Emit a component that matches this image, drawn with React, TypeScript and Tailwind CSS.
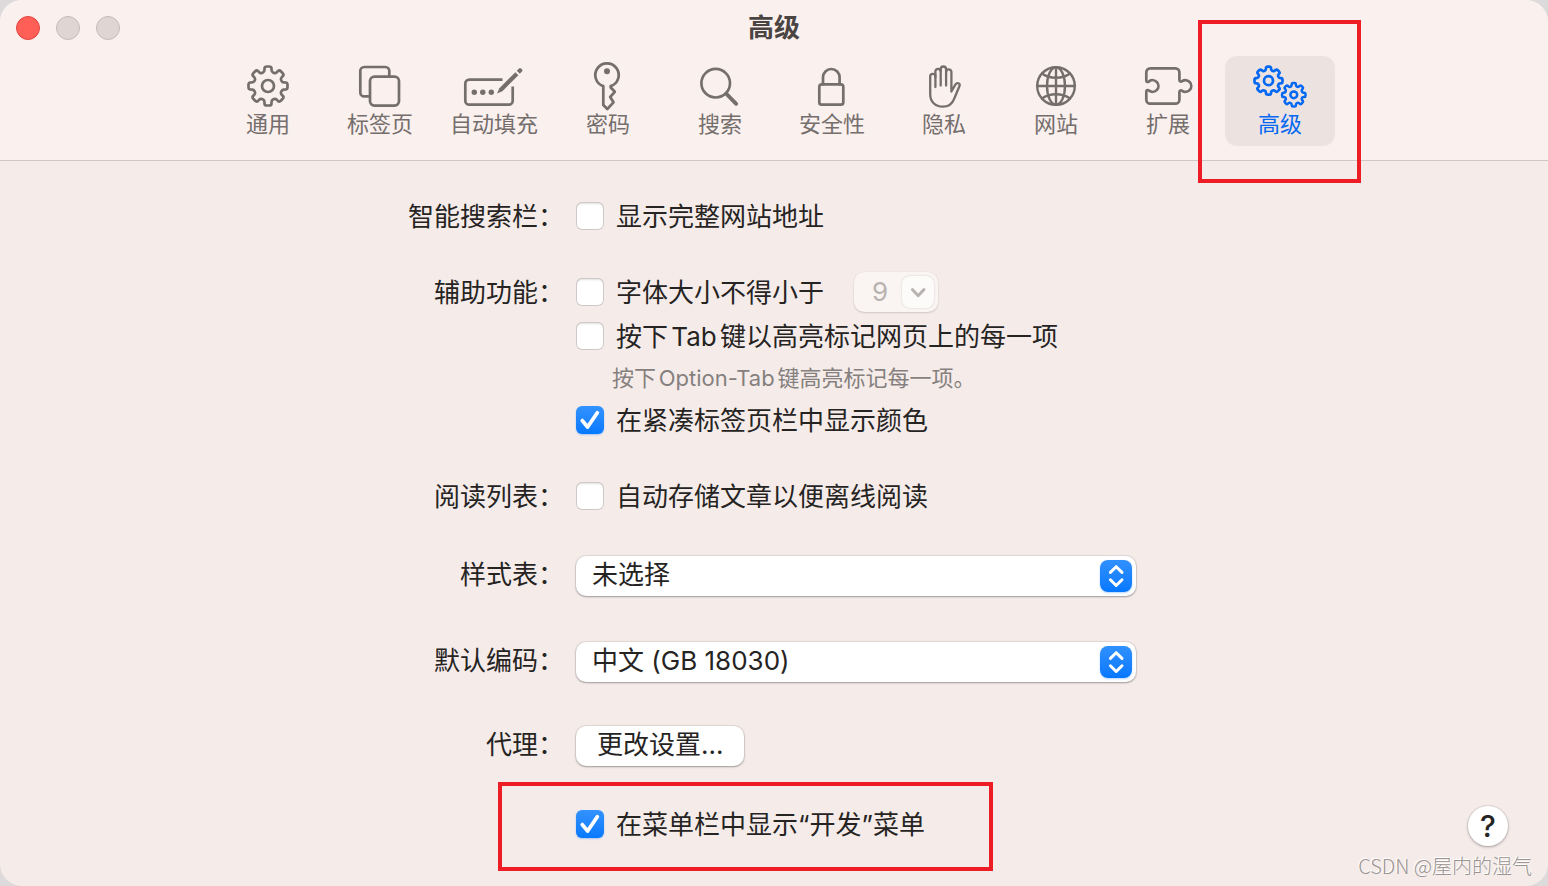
import type { ReactNode } from "react";

type Point = [number, number];

function gearPath(cx: number, cy: number, outer: number, root: number, teeth = 8) {
  const step = (Math.PI * 2) / teeth;
  const points: Point[] = [];
  for (let i = 0; i < teeth; i++) {
    const mid = i * step - Math.PI / 2;
    const corners: Point[] = [
      [-0.32, root],
      [-0.22, outer],
      [0.22, outer],
      [0.32, root],
    ];
    corners.forEach(([a, r]) => {
      points.push([cx + r * Math.cos(mid + a * step), cy + r * Math.sin(mid + a * step)]);
    });
  }
  const mix = (a: Point, b: Point, t: number) =>
    `${(a[0] + (b[0] - a[0]) * t).toFixed(2)} ${(a[1] + (b[1] - a[1]) * t).toFixed(2)}`;
  const d = points.map((p, i) => {
    const prev = points[(i + points.length - 1) % points.length];
    const next = points[(i + 1) % points.length];
    return `${i === 0 ? "M" : "L"}${mix(p, prev, 0.35)}Q${p[0].toFixed(2)} ${p[1].toFixed(2)} ${mix(p, next, 0.35)}`;
  });
  return d.join("") + "Z";
}

function Icon({ children }: { children: ReactNode }) {
  return (
    <svg
      width="64"
      height="52"
      viewBox="0 0 64 52"
      fill="none"
      stroke="currentColor"
      strokeWidth="2.7"
      strokeLinecap="round"
      strokeLinejoin="round"
      aria-hidden="true"
      className="shrink-0"
    >
      {children}
    </svg>
  );
}

const tabs = [
  {
    label: "通用",
    icon: (
      <>
        <path d={gearPath(32, 26, 19.8, 14.6)} />
        <circle cx="32" cy="26" r="6" />
      </>
    ),
  },
  {
    label: "标签页",
    icon: (
      <>
        <path d="M21 36.4h-4.7a4 4 0 0 1-4-4V11a4 4 0 0 1 4-4h21a4 4 0 0 1 4 4v5" />
        <rect x="22" y="16.6" width="29" height="29" rx="4.5" />
      </>
    ),
  },
  {
    label: "自动填充",
    wide: true,
    icon: (
      <>
        <path d="M40.5 19.6H7.3a4 4 0 0 0-4 4v17.1a4 4 0 0 0 4 4h39.4a4 4 0 0 0 4-4V26.5" strokeLinecap="butt" />
        <g fill="currentColor" stroke="none">
          <circle cx="12.3" cy="32.3" r="2.7" />
          <circle cx="20.8" cy="32.3" r="2.7" />
          <circle cx="29.3" cy="32.3" r="2.7" />
          <path d="M35 33.6l2.4-5.4 16-16 3 3-16 16z" />
          <path d="M54.8 10.8l2.2-2.2c1.6-1.5 4.5 1.3 3 3l-2.2 2.2z" />
        </g>
      </>
    ),
  },
  {
    label: "密码",
    icon: (
      <>
        <path d="M27.3 26.1V45l4 4 6.2-6.7-3.3-5.3 4.6-5.2-4.1-4.3v-1.4a11.7 11.7 0 1 0-7.4 0z" />
        <circle cx="31" cy="11.3" r="3" fill="currentColor" stroke="none" />
      </>
    ),
  },
  {
    label: "搜索",
    icon: (
      <>
        <circle cx="27.7" cy="23.2" r="14.3" />
        <path d="M38.4 33.9l9.8 9.9" strokeWidth="3.8" />
      </>
    ),
  },
  {
    label: "安全性",
    icon: (
      <>
        <rect x="19.3" y="24.3" width="24" height="20.4" rx="2.5" />
        <path d="M23 24.3v-7a8.3 8.3 0 0 1 16.6 0v7" />
      </>
    ),
  },
  {
    label: "隐私",
    icon: (
      <g strokeWidth="2.3">
        <path d="M23.4 27V16.5a2.6 2.6 0 0 0-5.2 0V34c0 7.8 5 12.7 12.6 12.7 6.6 0 9.7-3.4 11.6-8.4l5.1-12.3c1-2.9-2.4-4-4-1.6l-4.1 7.1V12a2.6 2.6 0 0 0-5.2 0" />
        <path d="M23.4 17v-5.5a2.65 2.65 0 0 1 5.3 0v14" />
        <path d="M28.7 11V9.2a2.7 2.7 0 0 1 5.4 0v16.3" />
      </g>
    ),
  },
  {
    label: "网站",
    icon: (
      <g strokeWidth="2.4">
        <circle cx="32" cy="26" r="18.8" />
        <ellipse cx="32" cy="26" rx="9" ry="18.8" />
        <path d="M32 7.2v37.6M13.2 26h37.6" />
        <path d="M18 13.5c4 3 9 4.3 14 4.3s10-1.3 14-4.3M18 38.5c4-3 9-4.3 14-4.3s10 1.3 14 4.3" />
      </g>
    ),
  },
  {
    label: "扩展",
    icon: (
      <path d="M10.3 20.5v-8.2a4 4 0 0 1 4-4h25.1a4 4 0 0 1 4 4V20c0 1.8 1.6 2 2.8 1.2a5.8 5.8 0 1 1 0 9.6c-1.2-.8-2.8-.6-2.8 1.2v7.7a4 4 0 0 1-4 4H14.3a4 4 0 0 1-4-4v-8.2c0-1.8 1.6-1.8 2.8-.9a5.8 5.8 0 1 0 0-9.2c-1.2.9-2.8.9-2.8-.9z" />
    ),
  },
  {
    label: "高级",
    active: true,
    icon: (
      <>
        <path d={gearPath(20.5, 20.7, 14.2, 10.8)} />
        <circle cx="20.5" cy="20.7" r="4.5" />
        <g strokeWidth="2.5">
          <path d={gearPath(45.8, 34.8, 11.9, 8.9)} />
          <circle cx="45.8" cy="34.8" r="3.4" />
        </g>
      </>
    ),
  },
];

function Row({ label, htmlFor, className, children }: { label?: string; htmlFor?: string; className?: string; children: ReactNode }) {
  return (
    <div className={`grid grid-cols-[160px_minmax(0,560px)] gap-3 ${className ?? ""}`}>
      {htmlFor ? (
        <label htmlFor={htmlFor} className="self-center pb-0.5 text-right whitespace-nowrap">{label}</label>
      ) : (
        <span className="h-7 text-right leading-[30px] whitespace-nowrap">{label}</span>
      )}
      <div>{children}</div>
    </div>
  );
}

function Checkbox({ label, defaultChecked }: { label: string; defaultChecked?: boolean }) {
  return (
    <label className="flex h-7 w-fit gap-3 leading-[30px] whitespace-nowrap [text-autospace:normal]">
      <span className="relative flex">
        <input
          type="checkbox"
          defaultChecked={defaultChecked}
          className="peer size-7 appearance-none rounded-md bg-white shadow-[inset_0_0_0_1px_#cfc8c6,inset_0_2px_2px_rgba(0,0,0,0.12)] checked:bg-linear-to-b checked:from-[#3292ff] checked:to-[#0579ff] checked:shadow-[0_1px_2px_rgba(0,110,255,0.3)]"
        />
        <svg
          viewBox="0 0 28 28"
          className="pointer-events-none absolute inset-0 hidden size-7 peer-checked:block"
          fill="none"
          stroke="white"
          strokeWidth="3.8"
          strokeLinecap="round"
          strokeLinejoin="round"
          aria-hidden="true"
        >
          <path d="M6.3 14.6l5.3 6.4L21.3 6.8" />
        </svg>
      </span>
      {label}
    </label>
  );
}

function Popup({ id, value }: { id: string; value: string }) {
  return (
    <div className="relative">
      <select
        id={id}
        className="h-10 w-full appearance-none rounded-[10px] bg-white pr-12 pb-0.5 pl-4 shadow-[0_0_1px_1px_rgba(0,0,0,0.08),0_1px_2px_rgba(0,0,0,0.3)]"
      >
        <option>{value}</option>
      </select>
      <span className="pointer-events-none absolute top-1 right-1 size-8 rounded-lg bg-linear-to-b from-[#2f90ff] to-[#0478ff] shadow-[0_1px_2px_rgba(0,110,255,0.3)]">
        <svg viewBox="0 0 32 32" fill="none" stroke="white" strokeWidth="3" strokeLinecap="round" strokeLinejoin="round" aria-hidden="true">
          <path d="M10.4 12.4l5.8-5.7 5.8 5.7M10.4 19.8l5.8 5.7 5.8-5.7" />
        </svg>
      </span>
    </div>
  );
}

export default function App() {
  return (
    <div className="bg-[#dcdada]">
      <div className="min-h-screen overflow-hidden rounded-[22px] bg-[#f5ecea] font-[Inter,'Noto_Sans_CJK_SC',sans-serif] text-[26px] leading-7 text-[#262423]">
        <header className="border-b border-[#d0c7c5] bg-[#faf0ee] pb-3.5">
          <div className="grid h-14 grid-cols-[1fr_auto_1fr] items-center px-4">
            <div className="flex gap-4">
              <button aria-label="关闭" className="size-6 rounded-full border border-[#e2463f] bg-[#ff5f57]" />
              <button aria-label="最小化" disabled className="size-6 rounded-full border border-[#c4bbb9] bg-[#dfd6d4]" />
              <button aria-label="缩放" disabled className="size-6 rounded-full border border-[#c4bbb9] bg-[#dfd6d4]" />
            </div>
            <h1 className="font-bold text-[#4a4443]">高级</h1>
          </div>
          <nav className="flex justify-center gap-0.5">
            {tabs.map((tab) => (
              <button
                key={tab.label}
                className={`relative flex h-[90px] flex-col items-center rounded-xl pt-1 text-[22px] leading-6 ${
                  tab.wide ? "w-[114px]" : "w-[110px]"
                } ${tab.active ? "bg-[#ece3e1] text-[#0568f2]" : "text-[#746e6c]"}`}
              >
                <Icon>{tab.icon}</Icon>
                {tab.label}
                {tab.active && (
                  <span className="pointer-events-none absolute -top-9 -left-[27px] size-[163px] border-4 border-[#ee1c25]" />
                )}
              </button>
            ))}
          </nav>
        </header>

        <main className="mx-auto w-fit pt-[41px] pr-2">
          <Row label="智能搜索栏：">
            <Checkbox label="显示完整网站地址" />
          </Row>

          <Row label="辅助功能：" className="mt-12">
            <div className="flex items-center gap-[30px]">
              <Checkbox label="字体大小不得小于" />
              <div className="relative -my-1.5">
                <select
                  disabled
                  aria-label="最小字体大小"
                  className="h-10 w-[84px] appearance-none rounded-[10px] bg-[#faf5f3] pl-[18px] text-[#b7b3b1] opacity-100 shadow-[0_0_1px_rgba(0,0,0,0.1),0_1px_2px_rgba(0,0,0,0.15)]"
                >
                  <option>9</option>
                </select>
                <span className="pointer-events-none absolute top-1 right-1 size-8 rounded-lg bg-[#fdfbfa] shadow-[0_0_2px_rgba(0,0,0,0.18)]">
                  <svg viewBox="0 0 32 32" fill="none" stroke="#b7b3b1" strokeWidth="3" strokeLinecap="round" strokeLinejoin="round" aria-hidden="true">
                    <path d="M10.4 13.5l5.8 6.2 5.8-6.2" />
                  </svg>
                </span>
              </div>
            </div>
            <div className="mt-4">
              <Checkbox label="按下Tab键以高亮标记网页上的每一项" />
            </div>
            <p className="mt-3.5 ml-9 text-[22px] whitespace-nowrap text-[#85807e] [text-autospace:normal]">
              按下Option-Tab键高亮标记每一项。
            </p>
            <div className="mt-3.5">
              <Checkbox label="在紧凑标签页栏中显示颜色" defaultChecked />
            </div>
          </Row>

          <Row label="阅读列表：" className="mt-12">
            <Checkbox label="自动存储文章以便离线阅读" />
          </Row>

          <Row label="样式表：" htmlFor="stylesheet" className="mt-[46px]">
            <Popup id="stylesheet" value="未选择" />
          </Row>

          <Row label="默认编码：" htmlFor="encoding" className="mt-[46px]">
            <Popup id="encoding" value="中文 (GB 18030)" />
          </Row>

          <Row label="代理：" htmlFor="proxies" className="mt-11">
            <button
              id="proxies"
              className="h-10 rounded-[10px] bg-white px-[21px] pb-0.5 shadow-[0_0_1px_1px_rgba(0,0,0,0.08),0_1px_2px_rgba(0,0,0,0.3)]"
            >
              更改设置...
            </button>
          </Row>

          <Row className="mt-11">
            <div className="relative">
              <Checkbox label="在菜单栏中显示“开发”菜单" defaultChecked />
              <span className="pointer-events-none absolute -top-7 -left-[78px] h-[89px] w-[495px] border-4 border-[#ee1c25]" />
            </div>
          </Row>
        </main>

        <footer className="-mt-8 flex flex-col items-end">
          <button
            aria-label="帮助"
            className="mr-10 size-10 rounded-full bg-white text-[30px] font-medium shadow-[0_0_1px_1px_rgba(0,0,0,0.06),0_1px_3px_rgba(0,0,0,0.3)]"
          >
            ?
          </button>
          <p className="mt-2 mr-4 font-['Noto_Sans_CJK_SC',sans-serif] text-[20px] leading-6 font-light text-[#9a9492] [text-shadow:-1px_-1px_0_#fff]">
            CSDN @屋内的湿气
          </p>
        </footer>
      </div>
    </div>
  );
}
